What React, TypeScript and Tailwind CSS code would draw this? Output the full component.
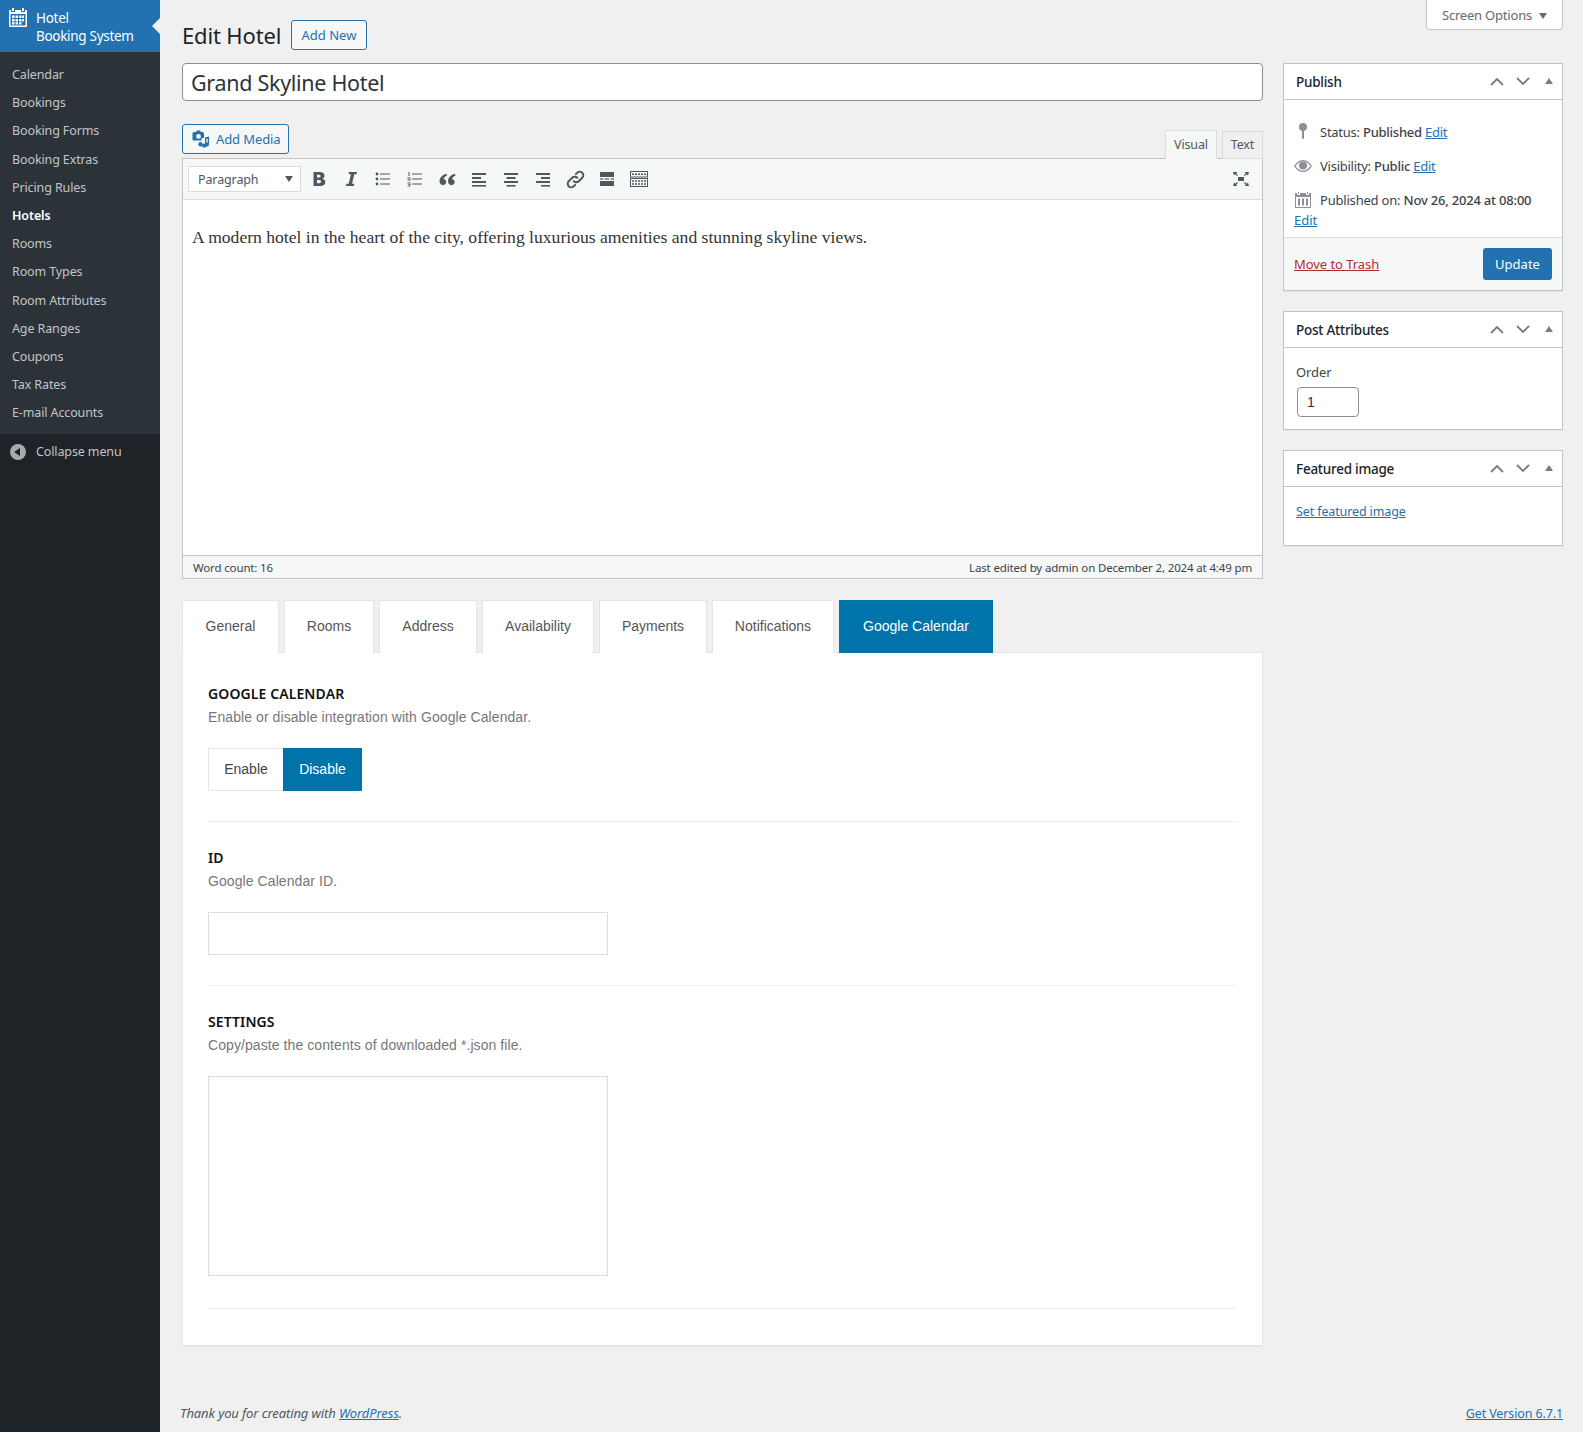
import React from "react";

const menu = ["Calendar","Bookings","Booking Forms","Booking Extras","Pricing Rules","Hotels","Rooms","Room Types","Room Attributes","Age Ranges","Coupons","Tax Rates","E-mail Accounts"];
const tabs = [
  { t: "General", w: "w-[97px]" },
  { t: "Rooms", w: "w-[90px]" },
  { t: "Address", w: "w-[98px]" },
  { t: "Availability", w: "w-[112px]" },
  { t: "Payments", w: "w-[108px]" },
  { t: "Notifications", w: "w-[122px]" },
  { t: "Google Calendar", w: "w-[154px]" },
];

function Ic({ w = 20, h = 20, vb = "0 0 20 20", cls = "", children }: { w?: number; h?: number; vb?: string; cls?: string; children: React.ReactNode }) {
  return <svg width={w} height={h} viewBox={vb} className={cls} fill="currentColor">{children}</svg>;
}

const TB = "flex w-[32px] h-[26px] items-center justify-center text-[#50575e]";

function Toolbar() {
  return (
    <div className="flex items-center h-[41px] pl-[5px] pr-[5px] bg-[#f6f7f7] border-b border-[#dcdcde]">
      <div className="flex items-center justify-between w-[113px] h-[26px] pl-[9px] pr-[7px] bg-white border border-[#dcdcde] text-[12.5px] tracking-[-0.12px] text-[#50575e]">
        <span className="pt-[2px]">Paragraph</span>
        <span className="w-0 h-0 border-x-[4px] border-x-transparent border-t-[6px] border-t-[#50575e]"></span>
      </div>
      <div className="flex items-center pl-[2px]">
        <div className={TB}><Ic w={14} h={16} vb="0 0 14 16"><path d="M1.500 1h6c3.200 0 5 1.300 5 3.700 0 1.500-.8 2.600-2.100 3.100 1.800.4 2.900 1.600 2.900 3.400 0 2.500-2 3.800-5.200 3.800H1.500V1zm3.500 2.700v2.900h1.700c1.200 0 1.900-.5 1.900-1.500S7.900 3.700 6.700 3.700H5zm0 5.300v3.300h2c1.400 0 2.100-.6 2.100-1.700S8.400 9 7 9H5z" /></Ic></div>
        <div className={TB}><Ic w={14} h={16} vb="0 0 14 16"><path d="M5 1h8l-.4 2.200h-2.300L8 12.800h2.300L9.900 15H2l.4-2.200h2.300L7 3.200H4.600L5 1z" /></Ic></div>
        <div className={TB}><Ic w={16} h={16} vb="0 0 16 16"><circle cx="2" cy="3" r="1.400" /><circle cx="2" cy="8" r="1.400" /><circle cx="2" cy="13" r="1.400" /><rect x="5" y="2.500" width="10" height="1" /><rect x="5" y="7.500" width="10" height="1" /><rect x="5" y="12.500" width="10" height="1" /></Ic></div>
        <div className={TB}><Ic w={16} h={16} vb="0 0 16 16"><rect x="5" y="2.500" width="10" height="1" /><rect x="5" y="7.500" width="10" height="1" /><rect x="5" y="12.500" width="10" height="1" /><rect x="1.500" y="1" width="1" height="4" /><rect x="0.500" y="6.500" width="3" height="1" /><rect x="2.500" y="7.500" width="1" height="1" /><rect x="0.500" y="8.500" width="3" height="1" /><rect x="0.500" y="11.500" width="3" height="1" /><rect x="0.500" y="14.500" width="3" height="1" /><rect x="1.500" y="13" width="2" height="1" /></Ic></div>
        <div className={TB}><Ic w={17} h={17} vb="0 0 16 16"><path d="M7 2.500C3.500 3.500.5 6 .5 9.500c0 2.300 1.400 3.800 3.300 3.800 1.600 0 2.900-1.300 2.900-2.900S5.600 7.700 4.200 7.600C4.500 6.300 5.700 5.100 7.600 4.200L7 2.500zM15 2.500c-3.500 1-6.500 3.500-6.500 7 0 2.300 1.400 3.800 3.300 3.800 1.600 0 2.900-1.300 2.900-2.900s-1.100-2.700-2.500-2.800c.3-1.300 1.500-2.500 3.400-3.400L15 2.500z" /></Ic></div>
        <div className={TB}><Ic w={16} h={16} vb="0 0 16 16"><rect x="1" y="2" width="14" height="2" /><rect x="1" y="6" width="9" height="2" /><rect x="1" y="10" width="14" height="2" /><rect x="1" y="14" width="14" height="1.600" /></Ic></div>
        <div className={TB}><Ic w={16} h={16} vb="0 0 16 16"><rect x="1" y="2" width="14" height="2" /><rect x="3.500" y="6" width="9" height="2" /><rect x="1" y="10" width="14" height="2" /><rect x="3.500" y="14" width="9" height="1.600" /></Ic></div>
        <div className={TB}><Ic w={16} h={16} vb="0 0 16 16"><rect x="1" y="2" width="14" height="2" /><rect x="6" y="6" width="9" height="2" /><rect x="1" y="10" width="14" height="2" /><rect x="6" y="14" width="9" height="1.600" /></Ic></div>
        <div className={TB}><svg width="21" height="21" viewBox="0 0 18 18" fill="none" stroke="currentColor" strokeWidth="1.700" strokeLinecap="round"><path d="M7.500 10.500a3 3 0 0 0 4.300 0l3-3a3 3 0 0 0-4.300-4.300l-1.200 1.200" /><path d="M10.500 7.500a3 3 0 0 0-4.300 0l-3 3a3 3 0 0 0 4.300 4.300l1.200-1.200" /></svg></div>
        <div className={TB}><Ic w={16} h={16} vb="0 0 16 16"><rect x="1" y="1" width="14" height="5" /><rect x="1" y="7.400" width="3.500" height="1.200" /><rect x="6" y="7.400" width="4" height="1.200" /><rect x="11.500" y="7.400" width="3.500" height="1.200" /><rect x="1" y="10" width="14" height="5" /></Ic></div>
        <div className={TB}><svg width="18" height="16" viewBox="0 0 18 16" fill="none" stroke="currentColor" strokeWidth="1"><rect x="0.500" y="0.500" width="17" height="5.500" /><path d="M2 3.200h14" strokeDasharray="2 1" strokeWidth="1.500" /><rect x="0.500" y="7.500" width="17" height="8" /><path d="M2 10h14M2 13h14" strokeDasharray="2 1" strokeWidth="1.500" /></svg></div>
      </div>
      <div className="ml-auto flex items-center justify-center w-[32px] h-[26px] text-[#50575e]">
        <Ic w={16} h={14} vb="0 0 16 14"><rect x="5" y="5" width="6" height="4" /><path d="M0 0h4.500L3.200 1.300 5 3.200 4.200 4 2.300 2.200 1 3.500zM16 0h-4.500l1.300 1.300L11 3.200l.8.800 1.900-1.800L15 3.500zM0 14h4.500l-1.300-1.300L5 10.800 4.200 10l-1.900 1.800L1 10.500zM16 14h-4.500l1.300-1.300L11 10.800l.8-.8 1.900 1.800 1.300-1.300z" /></Ic>
      </div>
    </div>
  );
}

function BoxHead({ title }: { title: string }) {
  return (
    <div className="flex items-center h-[36px] pl-[12px] pr-[9px] border-b border-[#c3c4c7]">
      <h2 className="flex-1 pt-[1px] text-[13.5px] tracking-[-0.25px] font-medium text-[#1d2327] leading-[1.4]">{title}</h2>
      <svg width="14" height="9" viewBox="0 0 14 9" fill="none" stroke="#787c82" strokeWidth="1.800" className="mr-[12px]"><path d="M1 8l6-6 6 6" /></svg>
      <svg width="14" height="9" viewBox="0 0 14 9" fill="none" stroke="#787c82" strokeWidth="1.800" className="mr-[15px]"><path d="M1 1l6 6 6-6" /></svg>
      <span className="w-0 h-0 mb-[2px] border-x-[4px] border-x-transparent border-b-[6px] border-b-[#787c82]"></span>
    </div>
  );
}

function Section({ label, desc, top, bottom, children }: { label: string; desc: string; top: string; bottom: string; children: React.ReactNode }) {
  return (
    <div className={top + " " + bottom + " border-b border-[#eeeeee]"}>
      <h3 className="text-[14px] font-semibold leading-[20px] tracking-[0.1px] uppercase text-[#111111] font-['Noto_Sans',sans-serif]">{label}</h3>
      <p className="mt-[3px] text-[14px] leading-[20px] tracking-[0.08px] text-[#777777]">{desc}</p>
      <div className="mt-[21px]">{children}</div>
    </div>
  );
}

export default function App() {
  return (
    <div className="flex w-[1583px] h-[1432px] bg-[#f0f0f1] font-['Noto_Sans',sans-serif] text-[13px] text-[#3c434a] overflow-hidden">
      <aside className="w-[160px] shrink-0 bg-[#1d2327]">
        <div className="relative flex h-[52px] bg-[#2271b1] text-white text-[13.5px] tracking-[-0.3px] leading-[18px]">
          <div className="pl-[9px] pt-[8px] w-[36px] shrink-0">
            <svg width="18" height="19" viewBox="0 0 18 19" fill="white"><path d="M3 0h2v3H3zM13 0h2v3h-2z" /><path fillRule="evenodd" d="M1 2h1v2h4V2h6v2h4V2h1a1 1 0 0 1 1 1v15a1 1 0 0 1-1 1H1a1 1 0 0 1-1-1V3a1 1 0 0 1 1-1zm.500 4v11.500h15V6z" /><path d="M3 7.500h2.500V10H3zM6.500 7.500H9V10H6.500zM10 7.500h2.500V10H10zM13.200 7.500h1.800V10h-1.800zM3 11h2.500v2.500H3zM6.500 11H9v2.500H6.500zM10 11h2.500v2.500H10zM13.200 11h1.800v2.500h-1.800zM3 14.200h2.500V16.500H3zM6.500 14.200H9V16.500H6.500zM10 14.200h2.500V16.500H10z" /></svg>
          </div>
          <div className="pt-[9px]">Hotel<br />Booking System</div>
          <span className="absolute right-0 top-[18px] w-0 h-0 border-y-[8px] border-y-transparent border-r-[8px] border-r-[#f0f0f1]"></span>
        </div>
        <ul className="bg-[#2c3338] pt-[9px] pb-[6.4px]">
          {menu.map((m) => (
            <li key={m} className={"px-[12px] py-[5px] text-[12.5px] tracking-[-0.12px] leading-[18.2px] " + (m === "Hotels" ? "text-white font-semibold" : "text-[#c3c4c7]")}>{m}</li>
          ))}
        </ul>
        <div className="flex items-center h-[36px] text-[12.5px] tracking-[-0.12px] text-[#c3c4c7]">
          <span className="flex items-center justify-center ml-[10px] w-[16px] h-[16px] rounded-full bg-[#a7aaad]">
            <span className="w-0 h-0 mr-[2px] border-y-[4px] border-y-transparent border-r-[6px] border-r-[#1d2327]"></span>
          </span>
          <span className="ml-[10px]">Collapse menu</span>
        </div>
      </aside>

      <main className="flex-1 flex flex-col pl-[22px] pr-[20px]">
        <div className="flex justify-end h-0">
          <div className="flex items-center justify-center gap-[7px] w-[137px] h-[30px] pt-[2px] bg-white border border-t-0 border-[#c3c4c7] rounded-b-[4px] text-[13px] tracking-[-0.2px] text-[#646970]">
            <span>Screen Options</span>
            <span className="w-0 h-0 border-x-[4px] border-x-transparent border-t-[6px] border-t-[#646970]"></span>
          </div>
        </div>

        <div className="flex items-center h-[30px] mt-[20px] mb-[13px]">
          <h1 className="w-[100px] whitespace-nowrap text-[22px] tracking-[-0.15px] leading-[30px] text-[#1d2327]">Edit Hotel</h1>
          <a className="ml-[9px] flex items-center justify-center w-[76px] h-[30px] pt-[1px] rounded-[3px] border border-[#2271b1] bg-[#f6f7f7] text-[13px] text-[#2271b1]">Add New</a>
        </div>

        <div className="flex gap-[20px]">
          <div className="w-[1081px] shrink-0">
            <input readOnly value="Grand Skyline Hotel" className="block w-full h-[38px] px-[8px] text-[21.5px] tracking-[-0.3px] text-[#2c3338] bg-white border border-[#8c8f94] rounded-[4px] outline-none" />

            <div className="flex justify-between mt-[23px] h-[34px]">
              <a className="flex items-center gap-[6px] self-start w-[107px] h-[30px] pl-[9px] rounded-[3px] border border-[#2271b1] bg-[#f6f7f7] text-[13px] tracking-[-0.1px] text-[#2271b1]">
                <svg width="18" height="18" viewBox="0 0 18 18" fill="currentColor"><path fillRule="evenodd" d="M3 2h1l1-1.500h3L9 2h1.500A1.500 1.500 0 0 1 12 3.500V8H9.500v2.500H1.500A1 1 0 0 1 .5 9.500v-6A1.500 1.500 0 0 1 2 2zm3.500 2a2.400 2.400 0 1 0 0 4.800 2.400 2.400 0 0 0 0-4.800z" /><path d="M17 6.500l-4 1v6.200a2 2 0 1 0 1.300 1.700V9l1.400-.4v4a2 2 0 1 0 1.300 1.700zM8.500 12a2.200 2.200 0 1 0 0 4.400 2.200 2.200 0 0 0 0-4.400z" /></svg>
                <span className="pt-[1px]">Add Media</span>
              </a>
              <div className="flex self-end gap-[5px] text-[12.5px] tracking-[-0.12px] text-[#50575e] -mb-[1px] relative z-10">
                <span className="flex items-center justify-center w-[52px] h-[29px] pt-[1px] bg-[#f6f7f7] border border-[#dcdcde] border-b-[#f6f7f7]">Visual</span>
                <span className="flex items-center justify-center w-[41px] h-[28px] mt-[1px] bg-[#f0f0f1] border border-[#dcdcde]">Text</span>
              </div>
            </div>

            <div className="border border-[#c3c4c7] bg-white">
              <Toolbar />
              <div className="h-[355px] px-[9px] pt-[24px] font-['Liberation_Serif',serif] text-[17.6px] leading-[26px] text-[#333333]">
                A modern hotel in the heart of the city, offering luxurious amenities and stunning skyline views.
              </div>
              <div className="flex justify-between items-center h-[23px] px-[10px] pt-[1px] bg-[#f6f7f7] border-t border-[#c3c4c7] text-[11.5px] tracking-[-0.15px] text-[#3c434a]">
                <span>Word count: 16</span>
                <span>Last edited by admin on December 2, 2024 at 4:49 pm</span>
              </div>
            </div>

            <div className="flex gap-[5px] mt-[21px] font-['Liberation_Sans',sans-serif] text-[14px]">
              {tabs.map(({ t, w }) => (
                <span key={t} className={w + " flex items-center justify-center h-[53px] -mb-[1px] " + (t === "Google Calendar" ? "pb-[1px] bg-[#0073aa] text-white" : "pb-[2px] bg-white text-[#555555] border border-b-0 border-[#e5e5e5]")}>{t}</span>
              ))}
            </div>
            <div className="h-[694px] px-[25px] bg-white border border-[#e5e5e5] shadow-[0_1px_1px_rgba(0,0,0,0.04)] font-['Liberation_Sans',sans-serif]">
              <Section label="Google Calendar" desc="Enable or disable integration with Google Calendar." top="pt-[31px]" bottom="pb-[30px]">
                <div className="flex h-[43px] text-[14px]">
                  <span className="flex items-center justify-center w-[75px] bg-white border border-r-0 border-[#e5e5e5] text-[#444444]">Enable</span>
                  <span className="flex items-center justify-center w-[79px] bg-[#0073aa] text-white">Disable</span>
                </div>
              </Section>
              <Section label="ID" desc="Google Calendar ID." top="pt-[26px]" bottom="pb-[30px]">
                <div className="w-[400px] h-[43px] bg-white border border-[#dddddd]"></div>
              </Section>
              <Section label="Settings" desc="Copy/paste the contents of downloaded *.json file." top="pt-[26px]" bottom="pb-[32px]">
                <div className="w-[400px] h-[200px] bg-white border border-[#dddddd]"></div>
              </Section>
            </div>
          </div>

          <div className="w-[280px] shrink-0 flex flex-col gap-[20px]">
            <section className="bg-white border border-[#c3c4c7] shadow-[0_1px_1px_rgba(0,0,0,0.04)]">
              <BoxHead title="Publish" />
              <div className="text-[13px] leading-[20px] pt-[9px]">
                <div className="flex items-center h-[44px] pl-[11px]">
                  <svg width="16" height="18" viewBox="0 0 16 18" fill="#8c8f94"><circle cx="8" cy="5" r="4" /><rect x="7" y="8" width="2" height="9" rx="1" /></svg>
                  <span className="ml-[9px] pt-[2px] tracking-[-0.25px]">Status: <b className="font-medium">Published</b> <a className="text-[#2271b1] underline">Edit</a></span>
                </div>
                <div className="flex items-center h-[26px] pl-[10px]">
                  <svg width="18" height="12" viewBox="0 0 18 12" fill="#8c8f94"><path fillRule="evenodd" d="M9 0c4 0 7 3 9 6-2 3-5 6-9 6S2 9 0 6c2-3 5-6 9-6zM1.500 6c1.700 2.300 4.200 4.800 7.500 4.800s5.800-2.500 7.500-4.800C14.800 3.700 12.300 1.200 9 1.200S3.200 3.700 1.500 6z" /><circle cx="9" cy="5.500" r="4" /></svg>
                  <span className="ml-[8px] tracking-[-0.25px]">Visibility: <b className="font-medium">Public</b> <a className="text-[#2271b1] underline">Edit</a></span>
                </div>
                <div className="pl-[10px] pt-[11px] pb-[7px]">
                  <div className="flex items-center h-[20px]">
                    <svg width="16" height="16" viewBox="0 0 16 16" fill="#8c8f94" className="ml-[1px]"><path d="M3 0h1v2H3zM12 0h1v2h-1z" /><path fillRule="evenodd" d="M0 1h2v2h3V1h6v2h3V1h2v15H0zm1 4v10h14V5z" /><path d="M3 6.500h2v7H3zM7 6.500h2v7H7zM11 6.500h2v7h-2z" /></svg>
                    <span className="ml-[9px] tracking-[-0.2px]">Published on: <b className="font-medium">Nov 26, 2024 at 08:00</b></span>
                  </div>
                  <a className="text-[#2271b1] underline">Edit</a>
                </div>
                <div className="flex items-center justify-between h-[53px] pl-[10px] pr-[10px] bg-[#f6f7f7] border-t border-[#dcdcde]">
                  <a className="pb-[1px] tracking-[-0.05px] text-[#b32d2e] underline">Move to Trash</a>
                  <span className="flex items-center justify-center w-[69px] h-[32px] rounded-[3px] bg-[#2271b1] text-white">Update</span>
                </div>
              </div>
            </section>

            <section className="bg-white border border-[#c3c4c7] shadow-[0_1px_1px_rgba(0,0,0,0.04)]">
              <BoxHead title="Post Attributes" />
              <div className="h-[81px] pl-[12px] pt-[14px]">
                <div className="leading-[20px] tracking-[-0.1px]">Order</div>
                <div className="flex items-center w-[62px] h-[30px] mt-[5px] ml-[1px] pl-[9px] border border-[#8c8f94] rounded-[4px] text-[14px] text-[#2c3338] font-['Liberation_Sans',sans-serif]">1</div>
              </div>
            </section>

            <section className="bg-white border border-[#c3c4c7] shadow-[0_1px_1px_rgba(0,0,0,0.04)]">
              <BoxHead title="Featured image" />
              <div className="h-[58px] pl-[12px] pt-[15px]">
                <a className="text-[12.5px] tracking-[-0.12px] text-[#2271b1] underline leading-[20px]">Set featured image</a>
              </div>
            </section>
          </div>
        </div>

        <div className="flex justify-between mt-[57px] -ml-[2px] text-[13px] leading-[20px] text-[#50575e]">
          <span className="italic tracking-[-0.1px]">Thank you for creating with <a className="text-[#2271b1] underline">WordPress</a>.</span>
          <a className="pt-[1px] text-[12.5px] tracking-[-0.12px] text-[#2271b1] underline">Get Version 6.7.1</a>
        </div>
      </main>
    </div>
  );
}
